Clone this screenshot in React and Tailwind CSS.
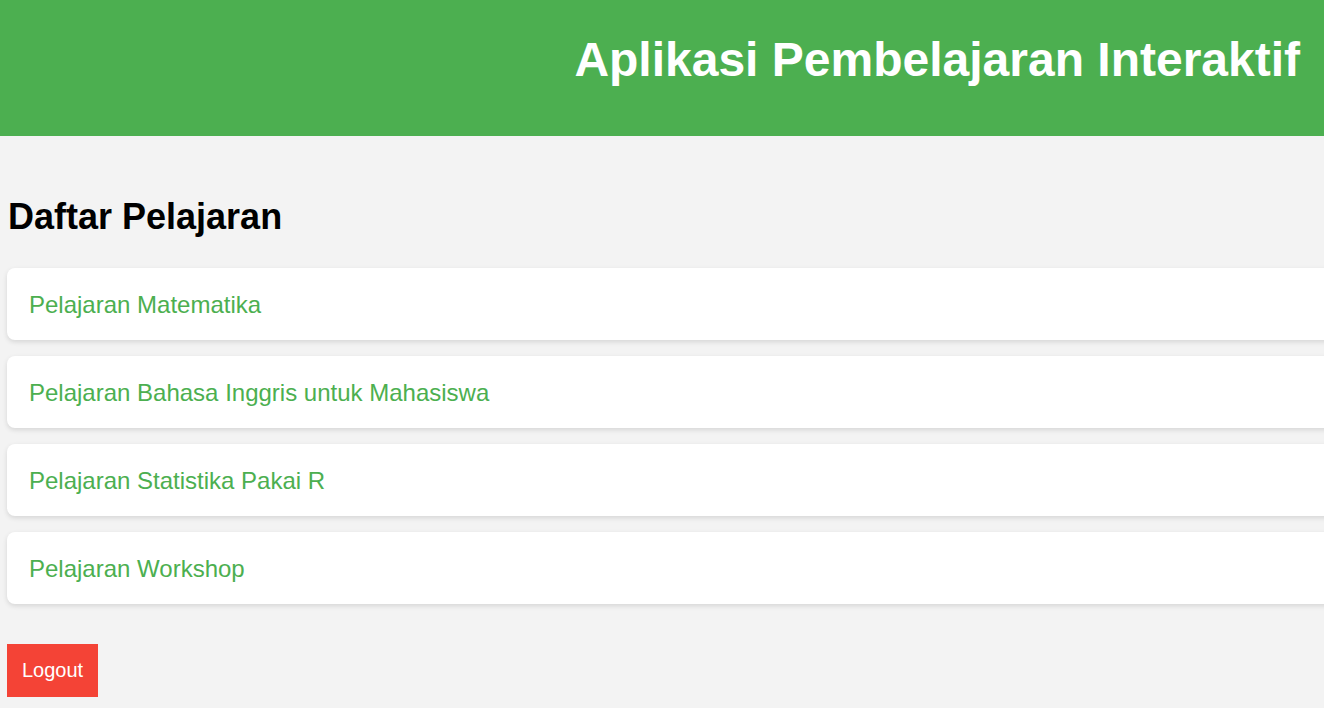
import React from 'react';

const lessons = [
  'Pelajaran Matematika',
  'Pelajaran Bahasa Inggris untuk Mahasiswa',
  'Pelajaran Statistika Pakai R',
  'Pelajaran Workshop',
];

export default function App() {
  return (
    <div
      className="min-h-[708px] overflow-hidden bg-[#f3f3f3]"
      style={{ fontFamily: '"Liberation Sans", Arial, sans-serif' }}
    >
      {/* Header */}
      <header className="h-[136px] bg-[#4caf50] pt-[32px] pr-[24px] text-right">
        <h1 className="text-[48px] font-bold leading-[56px] text-white">
          Aplikasi Pembelajaran Interaktif
        </h1>
      </header>

      {/* Content */}
      <main className="pl-[7px] pt-[61px]">
        <h2 className="pl-px text-[36px] font-bold leading-[40px] text-black">Daftar Pelajaran</h2>

        <ul className="mt-[31px] flex w-[1360px] flex-col gap-4">
          {lessons.map((name) => (
            <li
              key={name}
              className="flex h-[72px] items-center rounded-lg bg-white pl-[22px] pt-[2px] shadow-[0_2px_5px_rgba(0,0,0,0.12)]"
            >
              <a href="#" className="text-[24px] leading-[28px] text-[#4caf50]">
                {name}
              </a>
            </li>
          ))}
        </ul>

        <button className="mt-[40px] flex h-[53px] w-[91px] items-center justify-center bg-[#f44336] pb-[2px] text-[20px] text-white">
          Logout
        </button>
      </main>
    </div>
  );
}
